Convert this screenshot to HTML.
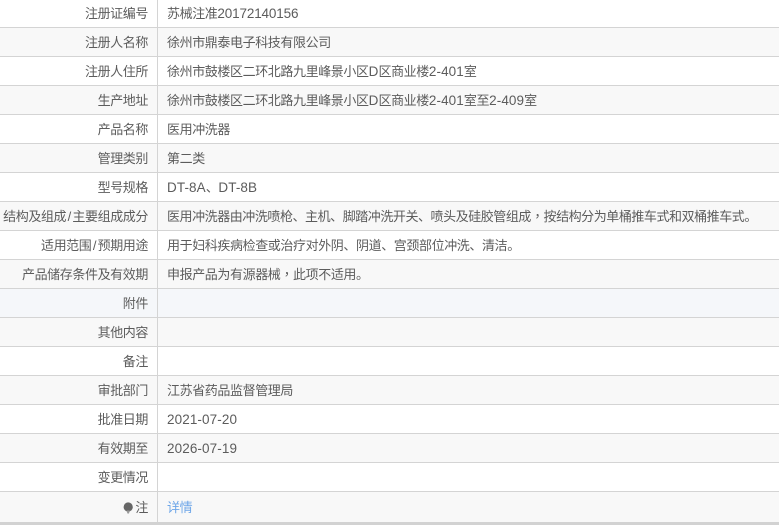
<!DOCTYPE html>
<html><head><meta charset="utf-8">
<style>
html,body{margin:0;padding:0;background:#fff}
body{width:779px;height:525px;overflow:hidden;position:relative;font-family:"Liberation Sans","Noto Sans CJK SC",sans-serif;font-size:13px;letter-spacing:-.4px;color:#5c5c5c}
.r{position:absolute;left:0;width:779px;height:28px;border-bottom:1px solid #d4d4d4;line-height:29px;white-space:nowrap}
.g{background:#f8f8f8}
.b{background:#f5f7fa}
.l{position:absolute;left:0;width:148px;text-align:right}
.v{position:absolute;left:167px;top:0}
.line{position:absolute;left:157px;top:0;width:1px;height:522px;background:#d4d4d4}
.bot{position:absolute;left:0;top:522px;width:779px;height:3px;background:#d2d2d2}
a{color:#6ea6e8;text-decoration:none}
i{font-style:normal;font-size:13.5px;letter-spacing:.1px;line-height:0}
u{text-decoration:none;font-family:"Noto Sans CJK TC",sans-serif;line-height:0}
b{font-weight:normal;padding:0 1.5px;line-height:0}
</style></head><body>
<div class="r" style="top:-1px"><div class="l">注册证编号</div><div class="v">苏械注准<i style="letter-spacing:-.15px">20172140156</i></div></div>
<div class="r g" style="top:28px"><div class="l">注册人名称</div><div class="v">徐州市鼎泰电子科技有限公司</div></div>
<div class="r" style="top:57px"><div class="l">注册人住所</div><div class="v">徐州市鼓楼区二环北路九里峰景小区<i>D</i>区商业楼<i>2-401</i>室</div></div>
<div class="r g" style="top:86px"><div class="l">生产地址</div><div class="v">徐州市鼓楼区二环北路九里峰景小区<i>D</i>区商业楼<i>2-401</i>室至<i>2-409</i>室</div></div>
<div class="r" style="top:115px"><div class="l">产品名称</div><div class="v">医用冲洗器</div></div>
<div class="r g" style="top:144px"><div class="l">管理类别</div><div class="v">第二类</div></div>
<div class="r" style="top:173px"><div class="l">型号规格</div><div class="v"><i>DT-8A</i>、<i>DT-8B</i></div></div>
<div class="r g" style="top:202px"><div class="l">结构及组成<b>/</b>主要组成成分</div><div class="v" style="letter-spacing:-.45px">医用冲洗器由冲洗喷枪、主机、脚踏冲洗开关、喷头及硅胶管组成<u>，</u>按结构分为单桶推车式和双桶推车式。</div></div>
<div class="r" style="top:231px"><div class="l">适用范围<b>/</b>预期用途</div><div class="v">用于妇科疾病检查或治疗对外阴、阴道、宫颈部位冲洗、清洁。</div></div>
<div class="r g" style="top:260px"><div class="l">产品储存条件及有效期</div><div class="v">申报产品为有源器械<u>，</u>此项不适用。</div></div>
<div class="r b" style="top:289px"><div class="l">附件</div></div>
<div class="r g" style="top:318px"><div class="l">其他内容</div></div>
<div class="r" style="top:347px"><div class="l">备注</div></div>
<div class="r g" style="top:376px"><div class="l">审批部门</div><div class="v">江苏省药品监督管理局</div></div>
<div class="r" style="top:405px"><div class="l">批准日期</div><div class="v"><i>2021-07-20</i></div></div>
<div class="r g" style="top:434px"><div class="l">有效期至</div><div class="v"><i>2026-07-19</i></div></div>
<div class="r" style="top:463px"><div class="l">变更情况</div></div>
<div class="r g" style="top:492px;height:30px;border:0;line-height:31px"><div class="l">注</div><div class="v"><a href="#">详情</a></div>
<svg style="position:absolute;left:123px;top:10px" width="11" height="13" viewBox="0 0 11 13"><circle cx="5.2" cy="5" r="4.6" fill="#666"/><path d="M3.6 8.5h3.2L6 11.5H4.4z" fill="#999"/></svg></div>
<div class="line"></div>
<div class="bot"></div>
</body></html>
